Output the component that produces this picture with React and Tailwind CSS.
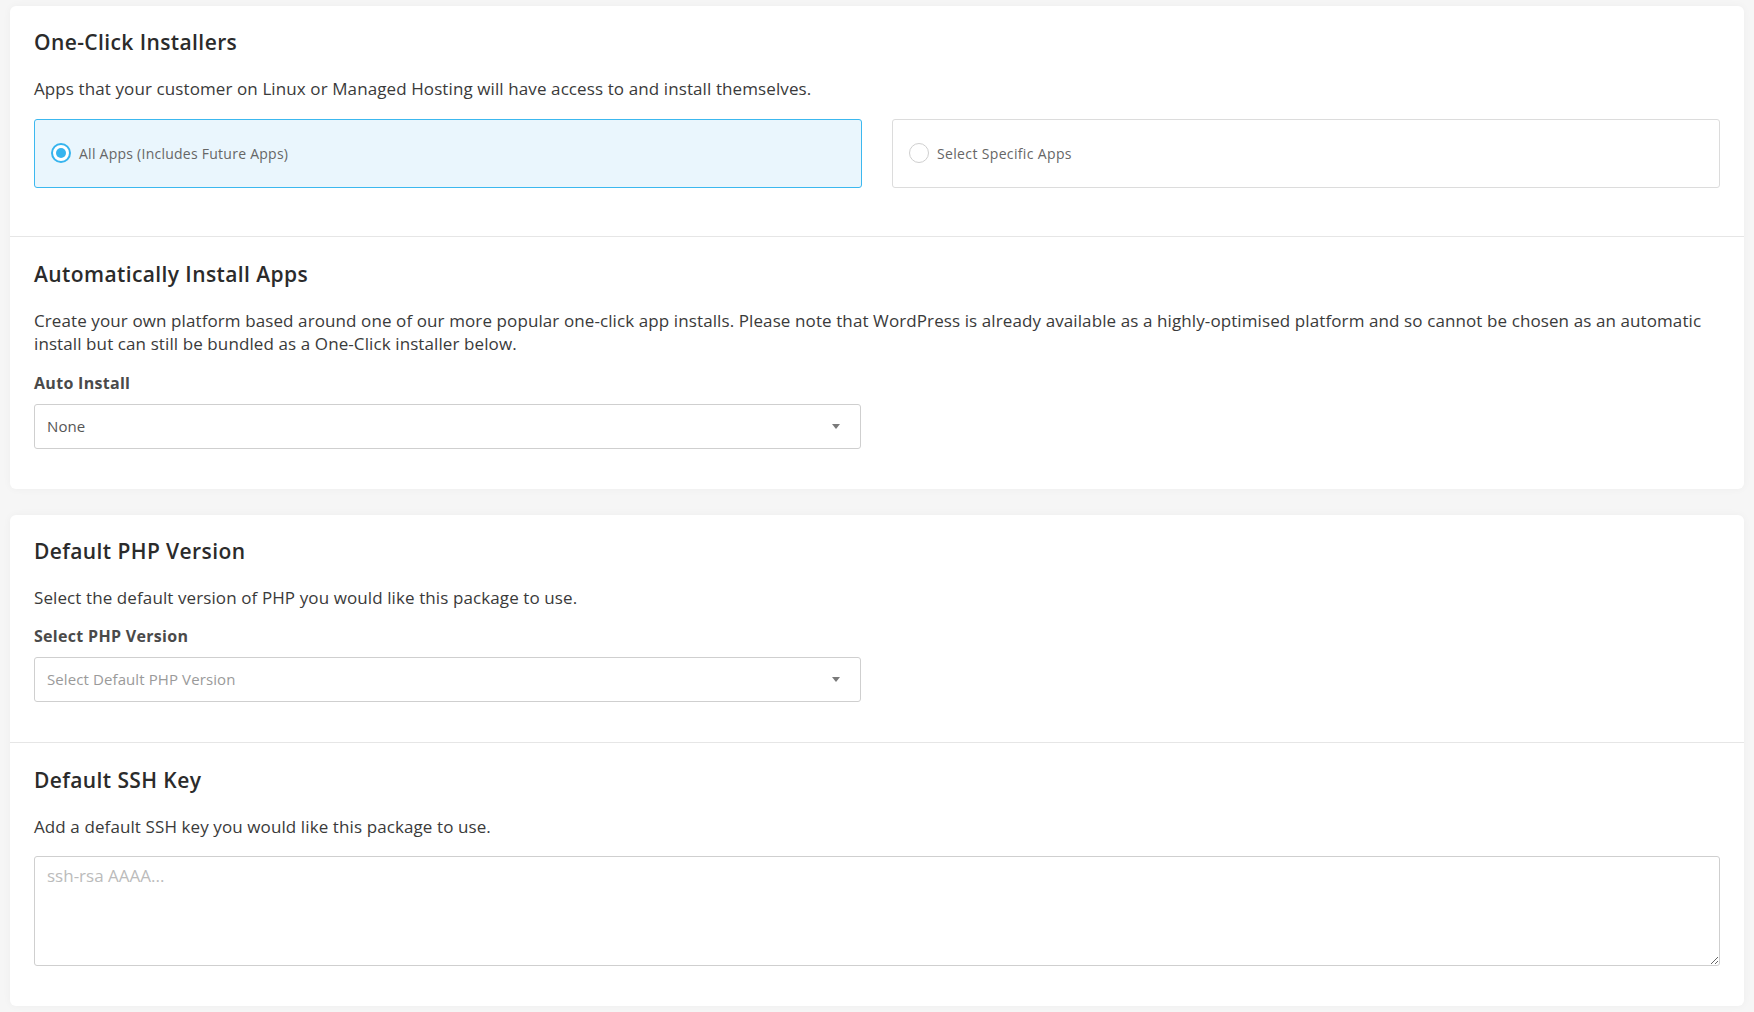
import React from "react";

const font = { fontFamily: '"Open Sans", "Liberation Sans", sans-serif' };

function Arrow() {
  return (
    <svg width="8" height="5" viewBox="0 0 8 5" className="shrink-0">
      <path d="M0 0 L8 0 L4 5 Z" fill="#7a7a7a" />
    </svg>
  );
}

function Select({ value, placeholder }) {
  return (
    <div className="flex h-[45px] w-[827px] items-center justify-between rounded-[3px] border border-[#cfcfcf] bg-white pl-[12px] pr-[20px]">
      <span className={placeholder ? "text-[15px] tracking-[0.1px] text-[#9a9a9a]" : "text-[15px] tracking-[0.1px] text-[#555]"}>{value}</span>
      <Arrow />
    </div>
  );
}

function Heading({ children }) {
  return <h2 className="text-[21px] font-semibold leading-[28px] tracking-[0.4px] text-[#2b2b2b]">{children}</h2>;
}

function Para({ children }) {
  return <p className="mt-[21px] text-[17px] leading-[23.5px] tracking-[0.1px] text-[#3a3a3a]">{children}</p>;
}

function Label({ children }) {
  return <div className="mt-[17px] text-[16px] font-bold leading-[20px] tracking-[0.3px] text-[#4a4a4a]">{children}</div>;
}

export default function App() {
  return (
    <div className="min-h-[1012px] bg-[#f6f6f6] px-[10px] pt-[6px] pb-[6px]" style={font}>
      <div className="rounded-[6px] bg-white shadow-[0_0_8px_rgba(0,0,0,0.04)]">
        <section className="px-[24px] pt-[22px] pb-[48px]">
          <Heading>One-Click Installers</Heading>
          <Para>Apps that your customer on Linux or Managed Hosting will have access to and install themselves.</Para>
          <div className="mt-[18px] grid grid-cols-2 gap-[30px]">
            <div className="flex h-[69px] items-center gap-[8px] rounded-[3px] border border-[#3cb8ef] bg-[#eaf6fd] px-[16px]">
              <span className="flex h-[20px] w-[20px] items-center justify-center rounded-full border-2 border-[#36b4ee] bg-white">
                <span className="h-[10px] w-[10px] rounded-full bg-[#36b4ee]" />
              </span>
              <span className="text-[14px] tracking-[0.25px] text-[#666]">All Apps (Includes Future Apps)</span>
            </div>
            <div className="flex h-[69px] items-center gap-[8px] rounded-[3px] border border-[#dcdcdc] bg-white px-[16px]">
              <span className="h-[20px] w-[20px] rounded-full border-[1.5px] border-[#cfcfcf] bg-white" />
              <span className="text-[14px] tracking-[0.35px] text-[#666]">Select Specific Apps</span>
            </div>
          </div>
        </section>
        <div className="h-px bg-[#e6e6e6]" />
        <section className="px-[24px] pt-[23px] pb-[40px]">
          <Heading>Automatically Install Apps</Heading>
          <Para>
            Create your own platform based around one of our more popular one-click app installs. Please note that WordPress is already available as a highly-optimised platform and so cannot be chosen as an automatic
            <br />
            install but can still be bundled as a One-Click installer below.
          </Para>
          <Label>Auto Install</Label>
          <div className="mt-[11px]">
            <Select value="None" />
          </div>
        </section>
      </div>

      <div className="mt-[26px] rounded-[6px] bg-white shadow-[0_0_8px_rgba(0,0,0,0.04)]">
        <section className="px-[24px] pt-[22px] pb-[40px]">
          <Heading>Default PHP Version</Heading>
          <Para>Select the default version of PHP you would like this package to use.</Para>
          <Label>Select PHP Version</Label>
          <div className="mt-[11px]">
            <Select value="Select Default PHP Version" placeholder />
          </div>
        </section>
        <div className="h-px bg-[#e6e6e6]" />
        <section className="px-[24px] pt-[23px] pb-[40px]">
          <Heading>Default SSH Key</Heading>
          <Para>Add a default SSH key you would like this package to use.</Para>
          <textarea
            className="mt-[17px] block h-[110px] w-full rounded-[3px] border border-[#cfcfcf] bg-white px-[12px] py-[6px] text-[17px] text-[#333] placeholder:text-[#bbb] outline-none"
            style={font}
            placeholder="ssh-rsa AAAA..."
          />
        </section>
      </div>
    </div>
  );
}
